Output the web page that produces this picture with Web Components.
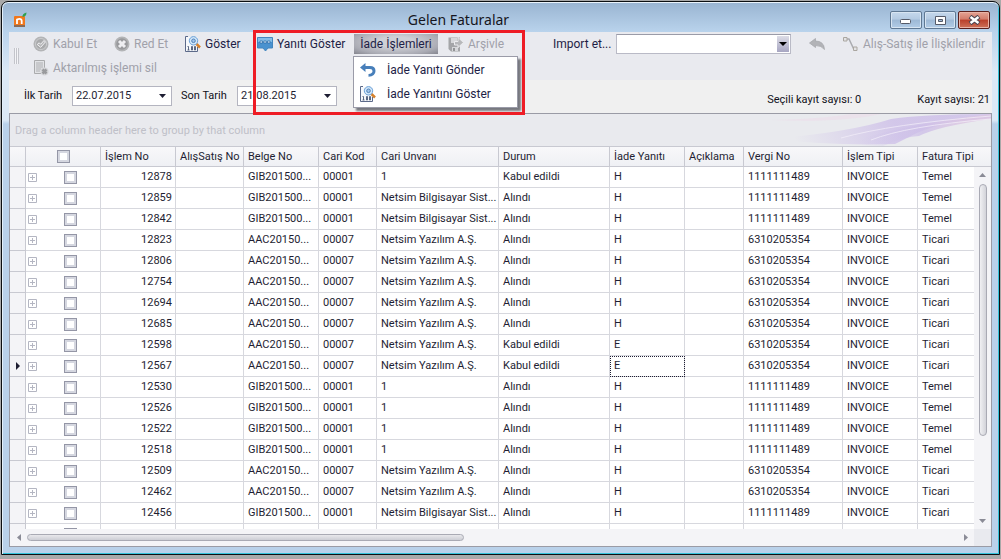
<!DOCTYPE html>
<html lang="tr">
<head>
<meta charset="utf-8">
<title>Gelen Faturalar</title>
<style>
html,body{height:100%}
body{margin:0;background:#a9a9a9;font-family:Roboto,"Noto Sans",sans-serif;font-size:11px;color:#1e1e32}
</style>
</head>
<body>
<invoice-window></invoice-window>
<script>
const ICONS = {
  logo:'<rect x="1" y="4" width="11" height="11" rx="1" fill="#f0771c"/><path d="M1 13h11v2H1z" fill="#8a6a55"/><path d="M4 12V6.800M4 8.300Q4.300 6.800 6.300 6.800Q8.700 6.800 8.700 9V12" fill="none" stroke="#fff" stroke-width="1.800"/><path d="M9.500 5Q9 1.500 13.500 .5Q13.500 4.500 9.500 5z" fill="#2fa052"/>',
  ok:'<circle cx="8" cy="8" r="7.500" fill="#b3b4b6"/><circle cx="8" cy="8" r="5.500" fill="#a9aaac" stroke="#cbccce"/><path d="M4.200 8.500L6.200 6.800L7.600 8.300L11 4.500L12.400 6L7.700 11.300z" fill="#b5b6b8" stroke="#f1f1f3"/>',
  no:'<circle cx="8" cy="8" r="7.500" fill="#b3b4b6"/><circle cx="8" cy="8" r="5.800" fill="#999a9d"/><path d="M5 5L11 11M11 5L5 11" stroke="#eeeef1" stroke-width="3"/>',
  show:'<path d="M.5 1H12.500V15.500H.500z" fill="#f6f8fb"/><path d="M3 .5H.500V15.500H12.500V11" fill="none" stroke="#5c6a8a"/><path d="M2.500 10.500H3.500V14M2.500 14H4.500M6.500 10.500h1v3.500H6.500zM9.500 10.500h1v3.500H9.500z" fill="none" stroke="#4a5876" stroke-width=".9"/><path d="M11.500 8L15 11.500" stroke="#d5812c" stroke-width="2.500"/><circle cx="8.500" cy="4.800" r="4.200" fill="#d3e8fa" stroke="#6a9fd6"/><circle cx="8.500" cy="4.800" r="1.800" fill="#a3c6ea" stroke="#4f80b8"/>',
  reply:'<path d="M.5 1.500H15.500V12H11L8.500 15L6 12H.500z" fill="#4a92cf" stroke="#4386bf"/><path d="M1 2H15V6H1z" fill="#83bde7"/><path d="M3 5h2.500v2H3zM6.800 5h2.500v2H6.800zM10.500 5H13v2h-2.500z" fill="#dceffc" stroke="#2866a0" stroke-width=".7"/>',
  archive:'<path d="M.5 1.500H12V15.500H3L.5 13z" fill="#a4a5a8"/><path d="M3 2H9V7H3zM4 11h6v4H4z" fill="#d7d8db"/><path d="M5 12h2v3H5z" fill="#929396"/><path d="M6.500 5.500H10V1.500L15.500 6.500L10 11.500V9H6.500z" fill="#b7b8bb" stroke="#ececef"/>',
  remove:'<path d="M1.500.5H11.500V13.500H1.500z" fill="#e2e3e6" stroke="#aaabad"/><path d="M3 3h7M3 5h7M3 7h7M3 9h5M3 11h4" stroke="#aeafb2"/><circle cx="11.500" cy="11.500" r="4" fill="#d4d5d8"/><path d="M9.500 9.500L13.500 13.500M13.500 9.500L9.500 13.500" stroke="#999a9d" stroke-width="2.500"/>',
  undo:'<path d="M0 5.500L5.500 1V4H10Q15.500 4 15.500 9Q15.500 14 8.500 14.800V12Q12.500 11.500 12.500 9Q12.500 7 10 7H5.500V10z" fill="#487fba"/>',
  back:'<path d="M.5 7L6.500 2.500V5Q15 5 15.500 13.500Q12.500 9.500 6.500 9.500V11.500z" fill="#b2b3b7" stroke="#a4a5a9" stroke-width=".7"/>',
  link:'<path d="M2.500 3H6L10.500 12.500H13" fill="none" stroke="#aaabb0" stroke-width="1.500"/><path d="M.5 1.500H4V5H.5zM10.500 11H14v3.500h-3.500z" fill="#e3e3e5" stroke="#aaa6a0"/>'
};
const define = (name, markup) => customElements.define(name, class extends HTMLElement {
  connectedCallback() {
    if (this.shadowRoot) return;
    const root = this.attachShadow({mode:'open'});
    const t = document.createElement('template');
    t.innerHTML = typeof markup === 'function' ? markup(this) : markup;
    root.append(t.content.cloneNode(true));
  }
});

define('app-icon', el => `<style>:host{display:block;flex:none;width:16px;height:16px}svg{display:block}</style>
<svg width="16" height="16" viewBox="0 0 16 16" aria-hidden="true">${ICONS[el.getAttribute('name')]}</svg>`);

define('tool-button', el => `<style>
:host{display:block;flex:none;height:20px}
button{display:flex;align-items:center;gap:4px;width:100%;height:20px;padding:0;border:0;background:none;font:inherit;color:#1e1e46;white-space:nowrap;text-align:left}
button:disabled{color:#a0a1aa}
:host([open]) button{justify-content:center;background:radial-gradient(ellipse at 50% 40%,#cfd0d6 0 30%,#a9aab3 75%,#85868f)}
</style><button type="button" ${el.hasAttribute('disabled')?'disabled':''} ${el.hasAttribute('label')?`aria-label="${el.getAttribute('label')}"`:''}>${el.hasAttribute('icon')?`<app-icon name="${el.getAttribute('icon')}"></app-icon>`:''}<slot></slot></button>`);

define('drop-menu', `<style>
:host{display:block;box-sizing:border-box;width:165px;padding:1px;background:#fff;border:1px solid #9a9ba8;box-shadow:3px 3px 2px #77787f;font-size:12px}
button{display:flex;align-items:center;gap:11px;width:100%;height:24px;padding:0 5px;border:0;background:none;font:inherit;color:#1e1e46;white-space:nowrap}
</style>
<button type="button"><app-icon name="undo"></app-icon>İade Yanıtı Gönder</button>
<button type="button"><app-icon name="show"></app-icon>İade Yanıtını Göster</button>`);

define('tool-bar', `<style>
:host{display:flex;box-sizing:border-box;height:48px;padding-left:5px;background:#e9eaef;font-size:12px}
.grip{flex:none;width:5px;height:16px;margin-top:16px;margin-right:14px;background:repeating-linear-gradient(90deg,#c3c4ca 0 1px,#f4f4f7 1px 2px)}
.rows{flex:1;min-width:0}
.row{display:flex;align-items:center;height:24px}
.row>*{flex:none}
.a{width:81px}.b{width:71px}.c{width:72px}.d{width:97px}.e{width:84px;margin-right:10px}.f{width:105px}
.g{width:34px}.h{width:140px}
.menu{position:relative}
drop-menu{position:absolute;left:-1px;top:22px;z-index:2}
label{display:block;width:63px;white-space:nowrap;color:#1e1e46}
.combo{position:relative;width:175px;margin-right:18px}
select{display:block;appearance:none;box-sizing:border-box;width:100%;height:20px;border:1px solid #b9bac6;border-top-color:#9a9ba8;border-radius:0;background:#fff;font:inherit}
.arrow{position:absolute;right:2px;top:2px;width:12px;height:16px;pointer-events:none;background:linear-gradient(#dcdce6,#a7a6c2)}
svg{display:block}
</style>
<div class="grip"></div>
<div class="rows">
<div class="row">
<tool-button class="a" icon="ok" disabled>Kabul Et</tool-button>
<tool-button class="b" icon="no" disabled>Red Et</tool-button>
<tool-button class="c" icon="show">Göster</tool-button>
<tool-button class="d" icon="reply">Yanıtı Göster</tool-button>
<div class="menu"><tool-button class="e" open>İade İşlemleri</tool-button><drop-menu></drop-menu></div>
<tool-button class="f" icon="archive" disabled>Arşivle</tool-button>
<label for="imp">Import et...</label>
<div class="combo"><select id="imp"><option></option></select><span class="arrow"><svg width="12" height="16"><path d="M2 6h8L6 10z" fill="#000"/></svg></span></div>
<tool-button class="g" icon="back" label="Geri al" disabled></tool-button>
<tool-button class="h" icon="link" disabled>Alış-Satış ile İlişkilendir</tool-button>
</div>
<div class="row"><tool-button icon="remove" disabled>Aktarılmış işlemi sil</tool-button></div>
</div>`);

define('date-field', el => `<style>
:host{display:flex;align-items:center}
label{width:var(--label,48px);white-space:nowrap;color:#101020}
.box{display:flex;box-sizing:border-box;width:100px;height:20px;border:1px solid #b4b5c0;background:#fff}
input{flex:1;min-width:0;padding:0 0 0 3px;border:0;background:none;font:inherit;color:#1e1e32;outline:0}
button{width:16px;padding:0;border:0;background:none}
svg{display:block;margin:auto}
</style><label for="d"><slot></slot></label><div class="box"><input id="d" value="${el.getAttribute('value')}"><button type="button" aria-label="Takvim"><svg width="8" height="4"><path d="M0 0h7L3.500 4z" fill="#1e1e32"/></svg></button></div>`);

define('filter-bar', `<style>
:host{display:flex;align-items:center;box-sizing:border-box;height:33px;padding:0 2px 2px 15px;background:#f0f0f0}
date-field{margin-right:9px}
.son{--label:56px}
.count{padding-top:8px;color:#101020;white-space:nowrap}
.sel{margin-left:auto;margin-right:56px}
</style>
<date-field value="22.07.2015">İlk Tarih</date-field>
<date-field class="son" value="21.08.2015">Son Tarih</date-field>
<span class="count sel">Seçili kayıt sayısı: 0</span><span class="count">Kayıt sayısı: 21</span>`);

const A = 'Netsim Yazılım A.Ş.', B = 'Netsim Bilgisayar Sist...', K = 'Kabul edildi', L = 'Alındı';
const ROWS = [
 [12878,'G','1',K,'H','Temel'],[12859,'G',B,L,'H','Temel'],[12842,'G',B,L,'H','Temel'],
 [12823,'A',A,L,'H','Ticari'],[12806,'A',A,L,'H','Ticari'],[12754,'A',A,L,'H','Ticari'],
 [12694,'A',A,L,'H','Ticari'],[12685,'A',A,L,'H','Ticari'],[12598,'A',A,K,'E','Ticari'],
 [12567,'A',A,K,'E','Ticari'],[12530,'G','1',L,'H','Temel'],[12526,'G','1',L,'H','Temel'],
 [12522,'G','1',L,'H','Temel'],[12518,'G','1',L,'H','Temel'],[12509,'A',A,L,'H','Ticari'],
 [12462,'A',A,L,'H','Ticari'],[12456,'G',B,L,'H','Ticari']];
const tools = '<div class="tools"><button type="button" aria-label="Genişlet"><svg width="9" height="9"><path d="M.5.5h8v8h-8zM4.500 2v5M2 4.500h5" fill="none" stroke="#b4b6c2"/></svg></button><input type="checkbox" aria-label="Seç"></div>';
const rowHtml = ([no,k,unvan,durum,iade,tip]) => {
  const g = k === 'G', cur = no === 12567;
  return `<tr><th scope="row">${cur?'<svg width="5" height="8"><path d="M0 0L4 4L0 8z" fill="#1e1e32"/></svg>':''}</th><td>${tools}</td><td class="num">${no}</td><td></td><td>${g?'GIB201500...':'AAC20150...'}</td><td>${g?'00001':'00007'}</td><td>${unvan}</td><td>${durum}</td><td${cur?' class="focus"':''}>${iade}</td><td></td><td>${g?'1111111489':'6310205354'}</td><td>INVOICE</td><td>${tip}</td></tr>`;
};
define('invoice-grid', `<style>
:host{display:grid;grid-template-columns:minmax(0,1fr) 17px;grid-template-rows:32px 21px minmax(0,1fr) 17px;box-sizing:border-box;border:1px solid #9a9ba5;background:#fff;min-height:0}
.group{grid-column:1/3;display:flex;justify-content:space-between;align-items:center;padding-left:5px;background:#e9eaee;color:#bfc0c8;overflow:hidden;white-space:nowrap}
.group svg{display:block;flex:none}
.view{grid-column:1/3;grid-row:2/4;overflow:hidden;min-height:0}
table{border-collapse:separate;border-spacing:0;table-layout:fixed;width:100%}
th,td{box-sizing:border-box;height:21px;padding:0 0 0 4px;border:0 solid #d7d8de;border-width:0 1px 1px 0;line-height:18px;font-weight:400;text-align:left;white-space:nowrap;overflow:hidden}
thead th{border-color:#c8c9d1;border-top-width:1px;background:linear-gradient(#f8f8fa,#eff0f4)}
tr>:last-child{border-right:0}
tbody th{background:#f4f4f7;padding:0 0 0 6px;border-color:#c8c9d1}
th svg{display:block}
.num{text-align:right;padding:0 3px 0 0}
thead .all{padding:0}
.tools{display:flex;align-items:center;gap:27px;margin-left:-2px}
button{flex:none;width:9px;height:9px;padding:0;border:0;background:none}
button svg{display:block}
input{flex:none;display:block;appearance:none;box-sizing:border-box;width:13px;height:13px;margin:0;border:1px solid #9496a6;background:#fff;box-shadow:inset 0 0 0 2px #d5d7e0}
.all input{margin:0 auto}
.focus{outline:1px dotted #1e1e32;outline-offset:-1px}
.v{grid-column:2;grid-row:3;display:flex;flex-direction:column;align-items:center;justify-content:space-between;background:#f4f4f7;padding:6px 0;z-index:1}
.h{grid-column:1;grid-row:4;display:flex;align-items:center;background:#f4f4f7;padding:0 6px 0 7px;box-sizing:border-box}
.corner{grid-column:2;grid-row:4;background:#e9eaef}
.v i{box-sizing:border-box;width:8px;flex:0 0 72%;margin:7px 0 auto;border:1px solid #a9aab4;border-radius:4px;background:linear-gradient(90deg,#f0f0f3,#d2d3d9)}
.h i{box-sizing:border-box;height:7px;flex:0 0 46%;margin:0 auto 0 6px;border:1px solid #a9aab4;border-radius:4px;background:linear-gradient(#e8e8ec,#cdced5)}
</style>
<div class="group"><span>Drag a column header here to group by that column</span>
<svg width="280" height="32" viewBox="0 0 280 32" aria-hidden="true"><defs>
<linearGradient id="a" gradientUnits="userSpaceOnUse" x1="90" y1="40" x2="180" y2="0"><stop stop-color="#cbbbe8" stop-opacity="0"/><stop offset="1" stop-color="#cbbbe8" stop-opacity=".75"/></linearGradient>
<linearGradient id="b" gradientUnits="userSpaceOnUse" x1="150" y1="32" x2="250" y2="0"><stop stop-color="#d3c8ea" stop-opacity="0"/><stop offset=".6" stop-color="#cdbfe8" stop-opacity=".8"/><stop offset="1" stop-color="#dcc6e2" stop-opacity=".8"/></linearGradient></defs>
<path d="M60 25Q140 18 180 5Q215 0 280 0V4Q225 8 200 22L184 30Q120 32 60 25z" fill="url(#a)"/>
<path d="M130 32Q180 12 280 0V5Q228 12 208 22Q195 22 172 32z" fill="url(#b)"/>
<path d="M130 24Q180 10 280 2M160 26Q195 12 280 5" fill="none" stroke="#f4effa" stroke-opacity=".7"/>
<path d="M60 6Q110 5 140 0H170Q130 9 60 6z" fill="#eddce9" opacity=".6"/></svg></div>
<div class="view"><table>
<colgroup><col style="width:16px"><col style="width:75px"><col style="width:75px"><col style="width:68px"><col style="width:75px"><col style="width:58px"><col style="width:122px"><col style="width:111px"><col style="width:75px"><col style="width:59px"><col style="width:99px"><col style="width:75px"><col></colgroup>
<thead><tr><th></th><th class="all"><input type="checkbox" aria-label="Tümünü seç"></th>${['İşlem No','AlışSatış No','Belge No','Cari Kod','Cari Unvanı','Durum','İade Yanıtı','Açıklama','Vergi No','İşlem Tipi','Fatura Tipi'].map(h=>`<th scope="col">${h}</th>`).join('')}</tr></thead>
<tbody>${ROWS.map(rowHtml).join('')}<tr><th></th><td>${tools}</td>${'<td></td>'.repeat(11)}</tr></tbody></table></div>
<div class="v"><svg width="7" height="4"><path d="M0 4h7L3.500 0z" fill="#8a8b96"/></svg><i></i><svg width="7" height="4"><path d="M0 0h7L3.500 4z" fill="#8a8b96"/></svg></div>
<div class="h"><svg width="4" height="7"><path d="M4 0v7L0 3.500z" fill="#8a8b96"/></svg><i></i><svg width="4" height="7"><path d="M0 0v7L4 3.500z" fill="#8a8b96"/></svg></div>
<div class="corner"></div>`);

define('title-bar', `<style>
:host{display:flex;align-items:flex-start;height:29px;padding:0 2px 0 4px}
app-icon{margin-top:9px}
h1{flex:1;margin:7px 0 0;font:14px/20px "Noto Sans",sans-serif;text-align:center;color:#151520}
button{display:grid;place-items:center;box-sizing:border-box;width:32px;height:18px;margin:8px 0 0 2px;padding:0;border:1px solid #5f7893;border-radius:2px;background:linear-gradient(#c5d8ec,#b4cae2 45%,#9db8d5 50%,#b2cce7);box-shadow:inset 0 0 0 1px #d8e5f2}
.x{border-color:#5b1f1c;background:linear-gradient(#e5a394,#d37b6a 45%,#b93f2a 50%,#ce7259);box-shadow:inset 0 0 0 1px #e9b3a6}
svg{display:block}
</style><app-icon name="logo"></app-icon><h1><slot></slot></h1>
<button type="button" aria-label="Küçült"><svg width="12" height="8"><rect x=".5" y="3.500" width="10" height="4" rx="1" fill="#fff" stroke="#555a68"/></svg></button>
<button type="button" aria-label="Büyüt"><svg width="11" height="9"><path d="M.5.5h10v8H.500zM3.500 3.500v2h4v-2z" fill="#fff" fill-rule="evenodd" stroke="#555a68"/></svg></button>
<button type="button" class="x" aria-label="Kapat"><svg width="13" height="10"><path d="M2 1.500L11 8.500M11 1.500L2 8.500" stroke="#4b4450" stroke-width="4.500"/><path d="M2.500 2L10.500 8M10.500 2L2.500 8" stroke="#fff" stroke-width="2.500"/></svg></button>`);

define('invoice-window', `<style>
:host{display:flex;height:100vh;box-sizing:border-box;padding:1px 1px 4px}
.frame{position:relative;flex:1;min-width:0;display:flex;flex-direction:column;box-sizing:border-box;padding:1px 7px 7px;border:1px solid #0c0f12;border-radius:7px 7px 0 0;background:linear-gradient(#99b4d1,#b9d3ec 30px,#dce9f6 70px,#dce9f6 118px,#b9d1ea 122px);box-shadow:inset 0 1px #eaf3fb,inset 1px 0 #e4f0fa,inset -1px -1px #35c3da;overflow:hidden}
invoice-grid{flex:1}
.mark{position:absolute;left:251px;top:28px;width:266px;height:79px;border:3px solid #ee1c25;pointer-events:none;z-index:5}
</style><div class="frame"><title-bar>Gelen Faturalar</title-bar><tool-bar></tool-bar><filter-bar></filter-bar><invoice-grid></invoice-grid><div class="mark"></div></div>`);
</script>
</body>
</html>
